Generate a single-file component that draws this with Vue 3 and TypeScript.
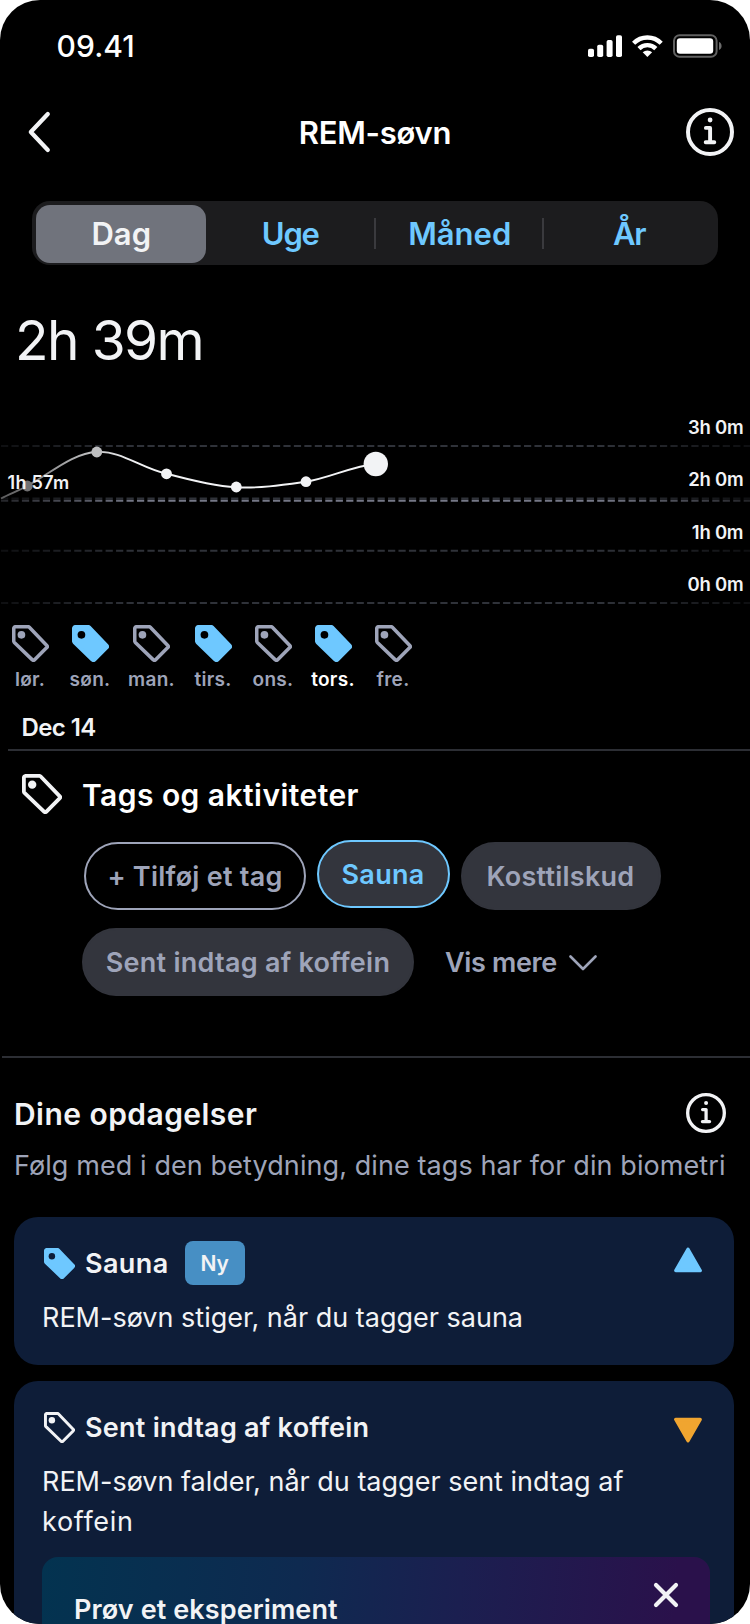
<script setup lang="ts">
import { defineComponent, h } from 'vue'

const TAG_PATH =
  'M3.600 1.700H15.700a2 2 0 0 1 1.400.6L34.300 20.200a1.500 1.500 0 0 1 0 2.100L22.300 34.400a1.500 1.500 0 0 1-2.200 0L2.300 17.200a2.100 2.100 0 0 1-.6-1.500V3.600A1.900 1.900 0 0 1 3.600 1.700Z'

const TagIcon = defineComponent({
  props: { filled: Boolean, hole: { type: String, default: '#000' } },
  setup: (props) => () =>
    h('svg', { viewBox: '0 0 36.5 36.5' }, [
      h('path', {
        d: TAG_PATH,
        fill: props.filled ? 'currentColor' : 'none',
        stroke: 'currentColor',
        'stroke-width': 3.5,
        'stroke-linejoin': 'round',
      }),
      h('circle', { cx: 9.3, cy: 9.7, r: 3.8, fill: props.filled ? props.hole : 'currentColor' }),
    ]),
})

const InfoIcon = defineComponent({
  setup: () => () =>
    h('svg', { viewBox: '0 0 48 48', fill: 'none', stroke: 'currentColor', 'stroke-linecap': 'round' }, [
      h('circle', { cx: 24, cy: 24, r: 22, 'stroke-width': 4 }),
      h('path', { d: 'M19.900 19.900H24.100V34.200M19.700 34.300H28.300', 'stroke-width': 3.9, 'stroke-linejoin': 'round' }),
      h('circle', { cx: 24.1, cy: 12, r: 2.4, fill: 'currentColor', stroke: 'none' }),
    ]),
})

interface Tab { label: string; cls: string }
const tabs: Tab[] = [
  { label: 'Dag', cls: 'tab active' },
  { label: 'Uge', cls: 'tab tight' },
  { label: 'Måned', cls: 'tab divided' },
  { label: 'År', cls: 'tab divided last tight' },
]

interface Day { label: string; tagged: boolean; current?: boolean }
const days: Day[] = [
  { label: 'lør.', tagged: false },
  { label: 'søn.', tagged: true },
  { label: 'man.', tagged: false },
  { label: 'tirs.', tagged: true },
  { label: 'ons.', tagged: false },
  { label: 'tors.', tagged: true, current: true },
  { label: 'fre.', tagged: false },
]

const gridLines = [
  { y: 446, label: '3h 0m', base: 434 },
  { y: 498.5, label: '2h 0m', base: 486 },
  { y: 550.7, label: '1h 0m', base: 538.5 },
  { y: 603, label: '0h 0m', base: 591 },
]

const points = [
  { x: 27.3, y: 486, r: 5.4, fill: '#717172' },
  { x: 96.8, y: 452, r: 5.4, fill: '#bdbebf' },
  { x: 166.5, y: 473.8, r: 5.4, fill: '#f2f3f5' },
  { x: 236.3, y: 487, r: 5.4, fill: '#f2f3f5' },
  { x: 306, y: 481.7, r: 5.4, fill: '#f2f3f5' },
  { x: 375.8, y: 464, r: 12.2, fill: '#f2f3f5' },
]
</script>

<template>
  <div class="screen">
    <div class="status">
      <span class="clock">09.41</span>
      <svg class="status-icons" viewBox="588 30 136 32" fill="#fff">
        <rect x="588" y="48.7" width="6" height="8.3" rx="1.8" />
        <rect x="597.2" y="44.7" width="6" height="12.3" rx="1.8" />
        <rect x="606.6" y="40" width="6" height="17" rx="1.8" />
        <rect x="616" y="35.3" width="6" height="21.7" rx="1.8" />
        <g fill="none" stroke="#fff" stroke-width="4.4">
          <path d="M633.6 43.2a19.4 19.4 0 0 1 27.6 0" />
          <path d="M639 48.6a11.9 11.9 0 0 1 16.8 0" />
        </g>
        <path d="M647.4 57l-4.7-4.7a6.8 6.8 0 0 1 9.4 0z" />
        <rect x="674" y="35.2" width="42.6" height="21.6" rx="5.6" fill="none" stroke="#fff" stroke-opacity=".38" stroke-width="2" />
        <rect x="676.8" y="38.2" width="36.4" height="15.6" rx="3.2" />
        <path d="M719 42v8c1.600-.6 2.600-2.200 2.600-4s-1-3.400-2.600-4z" opacity=".42" />
      </svg>
    </div>

    <header class="nav">
      <svg class="back" viewBox="0 0 24 42"><path d="M20.800 3 3.800 21l17 18" /></svg>
      <h1>REM-søvn</h1>
      <InfoIcon class="info-lg" />
    </header>

    <nav class="tabs">
      <div v-for="t in tabs" :key="t.label" :class="t.cls">{{ t.label }}</div>
    </nav>

    <div class="value">2h 39m</div>

    <svg class="chart" viewBox="0 376 750 240">
      <defs>
        <linearGradient id="edge" gradientUnits="userSpaceOnUse" x1="0" y1="0" x2="750" y2="0">
          <stop offset="0" stop-color="#fff" stop-opacity=".3" />
          <stop offset=".18" stop-color="#fff" />
          <stop offset=".8" stop-color="#fff" />
          <stop offset="1" stop-color="#fff" stop-opacity=".3" />
        </linearGradient>
        <linearGradient id="trend" gradientUnits="userSpaceOnUse" x1="0" y1="0" x2="376" y2="0">
          <stop offset="0" stop-color="#5a5a5b" />
          <stop offset=".36" stop-color="#f2f3f5" />
        </linearGradient>
        <mask id="fade" maskUnits="userSpaceOnUse" x="0" y="376" width="750" height="240">
          <rect x="0" y="376" width="750" height="240" fill="url(#edge)" />
        </mask>
      </defs>
      <g mask="url(#fade)" class="grid">
        <line v-for="g in gridLines" :key="g.y" x1="1" x2="750" :y1="g.y" :y2="g.y" />
        <line class="average" x1="1" x2="750" y1="500.8" y2="500.8" />
      </g>
      <path
        class="trend"
        d="M1 498.500C9 494 18 491 27 486 50 474 72 453 97 452 120 450 143 469 166 473.500 190 480 213 486 236 487.300 260 488.600 283 485 306 481.700 330 478 352 466 376 464"
      />
      <circle v-for="p in points" :key="p.x" :cx="p.x" :cy="p.y" :r="p.r" :fill="p.fill" />
      <text class="avg-label" x="7.500" y="489">1h 57m</text>
      <text v-for="g in gridLines" :key="g.label" class="axis" x="743.300" :y="g.base">{{ g.label }}</text>
    </svg>

    <div class="days">
      <div v-for="d in days" :key="d.label" class="day" :class="{ current: d.current }">
        <TagIcon :filled="d.tagged" class="day-tag" :class="{ tagged: d.tagged }" />
        <span>{{ d.label }}</span>
      </div>
    </div>
    <div class="date">Dec 14</div>

    <section class="tags">
      <div class="tags-head">
        <TagIcon class="tags-icon" />
        <h2>Tags og aktiviteter</h2>
      </div>
      <div class="pills first">
        <div class="pill add">+ Tilføj et tag</div>
        <div class="pill selected">Sauna</div>
        <div class="pill supplement">Kosttilskud</div>
      </div>
      <div class="pills second">
        <div class="pill coffee">Sent indtag af koffein</div>
        <div class="more">
          <span>Vis mere</span>
          <svg viewBox="0 0 28 16"><path d="M1.500 1.500 14 14 26.500 1.500" /></svg>
        </div>
      </div>
    </section>

    <section class="insights">
      <div class="insights-head">
        <h2>Dine opdagelser</h2>
        <InfoIcon class="info-sm" />
      </div>
      <p class="lead">Følg med i den betydning, dine tags har for din biometri</p>

      <article class="card short">
        <div class="card-head">
          <TagIcon filled hole="#0e1d38" class="card-tag tagged" />
          <h3>Sauna</h3>
          <span class="badge">Ny</span>
          <svg class="trend-mark up" viewBox="0 0 30 26"><path d="M15 2.300 27.200 23.500H2.800Z" /></svg>
        </div>
        <p>REM-søvn stiger, når du tagger sauna</p>
      </article>

      <article class="card">
        <div class="card-head">
          <TagIcon class="card-tag" />
          <h3 class="wide">Sent indtag af koffein</h3>
          <svg class="trend-mark down" viewBox="0 0 30 26"><path d="M15 23.700 2.800 2.500H27.200Z" /></svg>
        </div>
        <p>REM-søvn falder, når du tagger sent indtag af <span class="wrap-word">koffein</span></p>
        <div class="experiment">
          <span>Prøv et eksperiment</span>
          <svg viewBox="0 0 26 26"><path d="M3 3 23 23M23 3 3 23" /></svg>
        </div>
      </article>
    </section>
  </div>
</template>

<style>
body {
  background: #fff;
}
</style>

<style scoped>
.screen {
  width: 750px;
  height: 1624px;
  overflow: hidden;
  background: #000;
  border-radius: 40px;
  color: #f2f3f5;
  font-family: Inter, 'Liberation Sans', sans-serif;
}
h1, h2, h3, p {
  margin: 0;
}
svg {
  display: block;
  flex: none;
}
.status {
  display: flex;
  align-items: center;
  justify-content: space-between;
  box-sizing: border-box;
  height: 91px;
  padding: 0 26px 0 56.500px;
  color: #fff;
}
.clock {
  font-size: 30px;
  font-weight: 500;
  letter-spacing: 0.1px;
}
.status-icons {
  width: 136px;
  height: 32px;
}
.nav {
  display: grid;
  grid-template-columns: 60px 1fr 60px;
  align-items: center;
  box-sizing: border-box;
  height: 82px;
  padding: 0 16px 0 27px;
}
.back {
  width: 24px;
  height: 42px;
  fill: none;
  stroke: #f2f3f5;
  stroke-width: 4.2;
  stroke-linecap: round;
  stroke-linejoin: round;
}
.nav h1 {
  text-align: center;
  padding-right: 11px;
  font-size: 31px;
  font-weight: 600;
  letter-spacing: -0.25px;
  color: #fff;
}
.info-lg {
  width: 48px;
  height: 48px;
  justify-self: end;
}
.tabs {
  display: grid;
  grid-template-columns: repeat(4, 1fr);
  box-sizing: border-box;
  width: 686px;
  height: 64px;
  margin: 28px 0 0 32px;
  padding: 4px;
  border-radius: 18px;
  background: #1c1c1e;
}
.tab {
  position: relative;
  line-height: 58px;
  text-align: center;
  font-size: 31px;
  font-weight: 600;
  color: #6ec8ff;
  border-radius: 14px;
}
.tab.active {
  background: #70737c;
  color: #f2f3f5;
  text-indent: 1px;
}
.tab.tight {
  letter-spacing: -1.2px;
}
.tab.divided::before {
  content: '';
  position: absolute;
  left: -1px;
  top: 13px;
  width: 2px;
  height: 31px;
  background: #3a3a3e;
}
.tab.last::before {
  left: -3px;
}
.value {
  margin: 40px 0 0 15px;
  line-height: 71px;
  font-size: 55px;
  letter-spacing: -1.6px;
}
.chart {
  width: 750px;
  height: 240px;
}
.grid line {
  stroke: #2f3239;
  stroke-width: 2;
  stroke-dasharray: 7.2 3.26;
}
.grid .average {
  stroke: #757887;
}
.trend {
  fill: none;
  stroke: url(#trend);
  stroke-width: 1.9;
}
.chart text {
  fill: #f2f3f5;
  font-weight: 600;
}
.avg-label {
  font-size: 18px;
  letter-spacing: 0.3px;
}
.axis {
  font-size: 18.500px;
  letter-spacing: -0.25px;
  text-anchor: end;
}
.days {
  display: grid;
  grid-template-columns: 60px 60px 63px 60px 60px 60px 60px;
  box-sizing: border-box;
  height: 84px;
  padding-top: 9px;
}
.day {
  display: flex;
  flex-direction: column;
  align-items: center;
  gap: 6px;
  line-height: 24px;
  font-size: 19px;
  font-weight: 600;
  letter-spacing: 0.3px;
  color: #9ea4b9;
}
.day.current span {
  color: #fff;
}
.day-tag {
  width: 37px;
  height: 37px;
}
.tagged {
  color: #6ec8ff;
}
.date {
  box-sizing: border-box;
  height: 51px;
  margin-left: 8px;
  padding: 14px 0 0 13.500px;
  border-bottom: 2px solid #2c2e34;
  line-height: 28px;
  font-size: 24px;
  font-weight: 600;
  letter-spacing: -0.6px;
}
.tags {
  box-sizing: border-box;
  height: 307px;
  padding-top: 23px;
  margin-left: 2px;
  border-bottom: 2px solid #2c2e34;
}
.tags-head {
  display: flex;
  align-items: center;
  gap: 20px;
  height: 40px;
  padding-left: 20px;
}
.tags-icon {
  width: 40px;
  height: 40px;
}
.tags-head h2 {
  padding-top: 2px;
  font-size: 30px;
  font-weight: 600;
  letter-spacing: 0.45px;
  color: #fff;
}
.pills {
  display: flex;
  align-items: flex-end;
}
.pills.first {
  margin-top: 26px;
  height: 70px;
  padding-left: 82px;
}
.pills.second {
  margin-top: 18px;
  padding-left: 80px;
}
.pill {
  box-sizing: border-box;
  height: 68px;
  border: 2px solid #33353d;
  border-radius: 34px;
  background: #33353d;
  text-align: center;
  line-height: 65px;
  font-size: 27px;
  font-weight: 600;
  letter-spacing: 0.25px;
  color: #9ea4b9;
}
.pill.add {
  width: 222px;
  border-color: #9ea4b9;
  background: transparent;
}
.pill.selected {
  align-self: flex-start;
  width: 133px;
  margin: 0 11px;
  border-color: #6ec8ff;
  color: #6ec8ff;
  text-indent: -1px;
}
.pill.supplement {
  width: 200px;
  text-indent: -1px;
}
.pill.coffee {
  width: 332px;
}
.more {
  display: flex;
  align-items: center;
  height: 68px;
  margin-left: 31px;
  gap: 12px;
  font-size: 27px;
  font-weight: 600;
  letter-spacing: -0.35px;
  color: #9ea4b9;
}
.more svg {
  width: 28px;
  height: 16px;
  margin-top: 2px;
  fill: none;
  stroke: #9ea4b9;
  stroke-width: 2.6;
  stroke-linecap: round;
  stroke-linejoin: round;
}
.insights {
  padding: 35px 16px 0 14px;
}
.insights-head {
  display: flex;
  justify-content: space-between;
  align-items: center;
  height: 40px;
  padding-right: 8px;
}
.insights-head h2 {
  padding-top: 2px;
  font-size: 30px;
  font-weight: 600;
  letter-spacing: 0.45px;
}
.info-sm {
  width: 40px;
  height: 40px;
}
.lead {
  height: 84px;
  padding-top: 13px;
  box-sizing: border-box;
  line-height: 40px;
  font-size: 27px;
  letter-spacing: 0.09px;
  white-space: nowrap;
  color: #9ea4b9;
}
.card {
  box-sizing: border-box;
  height: 300px;
  width: 719.500px;
  margin-bottom: 16px;
  padding: 24px 24px 0 27.500px;
  border-radius: 24px;
  background: #0e1d38;
}
.card.short {
  height: 148px;
}
.card-head {
  display: flex;
  align-items: center;
  height: 44px;
}
.card-tag {
  width: 31px;
  height: 31px;
  margin: 0 10.500px 0 2px;
}
.card h3 {
  padding-top: 1px;
  font-size: 27px;
  font-weight: 600;
  letter-spacing: 0.4px;
}
.card h3.wide {
  letter-spacing: 0.25px;
}
.badge {
  width: 60px;
  height: 44px;
  margin-left: 16px;
  border-radius: 8px;
  background: #478fc4;
  text-align: center;
  line-height: 45px;
  font-size: 21px;
  font-weight: 600;
}
.trend-mark {
  width: 30px;
  height: 26px;
  margin: 0 7px 6px auto;
  stroke-width: 3.4;
  stroke-linejoin: round;
}
.trend-mark.up {
  fill: #6ec8ff;
  stroke: #6ec8ff;
}
.trend-mark.down {
  fill: #f0a530;
  stroke: #f0a530;
  margin-bottom: 0;
  margin-top: 6px;
}
.card p {
  margin-top: 13px;
  padding-left: 0.5px;
  line-height: 40px;
  font-size: 27px;
}
.wrap-word {
  display: block;
  letter-spacing: 0.7px;
}
.experiment {
  display: flex;
  align-items: flex-start;
  justify-content: space-between;
  height: 120px;
  margin-top: 15px;
  padding: 25px 31px 0 32.500px;
  box-sizing: border-box;
  border-radius: 16px;
  background: linear-gradient(95deg, #033350 0%, #0e2a50 38%, #1b1f50 62%, #2a114b 94%);
  font-size: 27px;
  font-weight: 600;
}
.experiment span {
  margin-top: 8px;
  line-height: 40px;
  letter-spacing: 0.1px;
}
.experiment svg {
  width: 26px;
  height: 26px;
  stroke: #f2f3f5;
  stroke-width: 4.2;
  stroke-linecap: round;
}
</style>
